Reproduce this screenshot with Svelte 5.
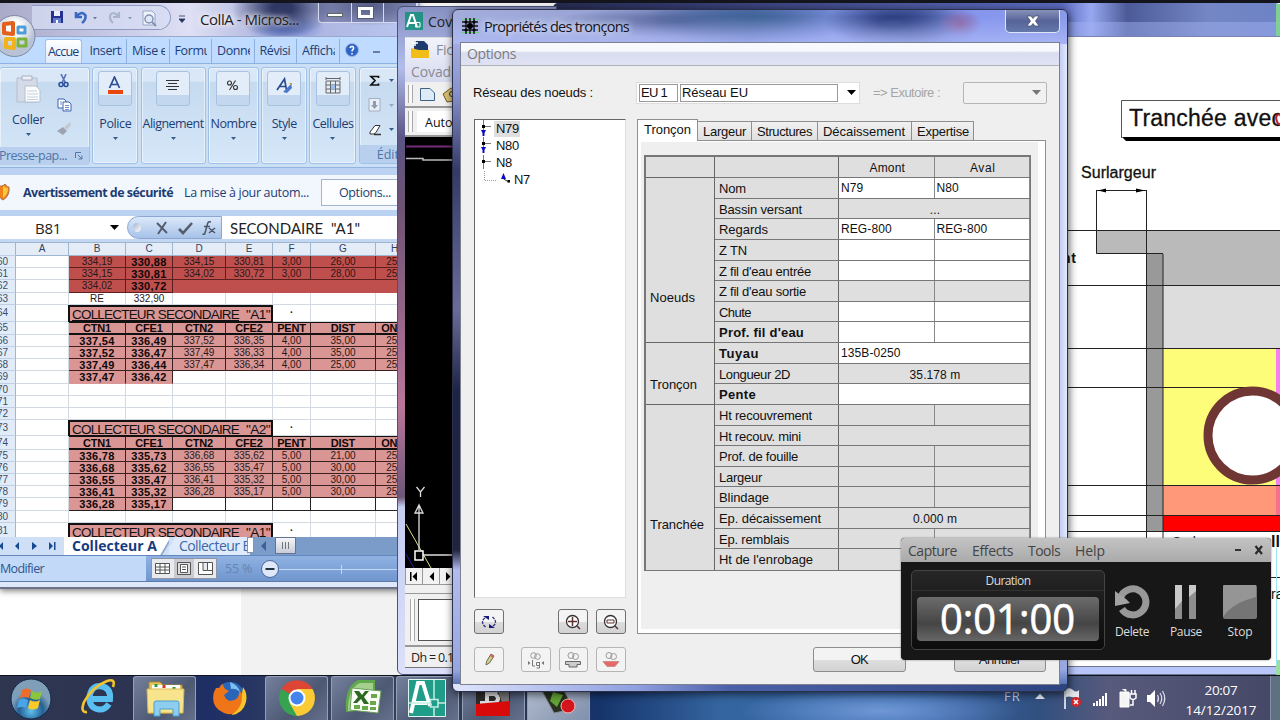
<script lang="ts">
  type Row = { n: string; h: number; kind: string; cells: string[] };

  // spreads the letters of a label over a given width
  function fit(node: HTMLElement, width: number) {
    if (!width) return;
    const chars = node.textContent!.trim().length;
    const natural = node.getBoundingClientRect().width;
    node.style.letterSpacing = `${(width - natural) / chars}px`;
  }

  const tabs = ["Accue", "Inserti", "Mise e", "Formu", "Donné", "Révisi", "Afficha"];

  const groups = [
    { label: "Police", w: 46, tw: 32, icon: "font" },
    { label: "Alignement", w: 65, tw: 61, icon: "align" },
    { label: "Nombre", w: 51, tw: 46, icon: "percent" },
    { label: "Style", w: 46, tw: 25, icon: "style" },
    { label: "Cellules", w: 47, tw: 41, icon: "cells" },
  ];

  const cols = [
    { name: "A", w: 53 },
    { name: "B", w: 57 },
    { name: "C", w: 47 },
    { name: "D", w: 53 },
    { name: "E", w: 47 },
    { name: "F", w: 38 },
    { name: "G", w: 65 },
    { name: "H", w: 38 },
  ];

  const head = ["CTN1", "CFE1", "CTN2", "CFE2", "PENT", "DIST", "ON C"];

  const rows: Row[] = [
    { n: "60", h: 12, kind: "dark", cells: ["334,19", "330,88", "334,15", "330,81", "3,00", "26,00", "250"] },
    { n: "61", h: 12, kind: "dark", cells: ["334,15", "330,81", "334,02", "330,72", "3,00", "28,00", "250"] },
    { n: "62", h: 13, kind: "dark merged", cells: ["334,02", "330,72", "", "", "", "", ""] },
    { n: "63", h: 12, kind: "plain", cells: ["RE", "332,90", "", "", "", "", ""] },
    { n: "64", h: 17, kind: "title", cells: ['"A1"'] },
    { n: "65", h: 13, kind: "head", cells: head },
    { n: "66", h: 12, kind: "pink", cells: ["337,54", "336,49", "337,52", "336,35", "4,00", "35,00", "250"] },
    { n: "67", h: 12, kind: "pink", cells: ["337,52", "336,47", "337,49", "336,33", "4,00", "35,00", "250"] },
    { n: "68", h: 12, kind: "pink", cells: ["337,49", "336,44", "337,47", "336,34", "4,00", "25,00", "250"] },
    { n: "69", h: 13, kind: "pink last", cells: ["337,47", "336,42", "", "", "", "", ""] },
    { n: "70", h: 12, kind: "plain", cells: ["", "", "", "", "", "", ""] },
    { n: "71", h: 12, kind: "plain", cells: ["", "", "", "", "", "", ""] },
    { n: "72", h: 12, kind: "plain", cells: ["", "", "", "", "", "", ""] },
    { n: "73", h: 16, kind: "title", cells: ['"A2"'] },
    { n: "74", h: 14, kind: "head", cells: head },
    { n: "75", h: 12, kind: "pink", cells: ["336,78", "335,73", "336,68", "335,62", "5,00", "21,00", "250"] },
    { n: "76", h: 12, kind: "pink", cells: ["336,68", "335,62", "336,55", "335,47", "5,00", "30,00", "250"] },
    { n: "77", h: 12, kind: "pink", cells: ["336,55", "335,47", "336,41", "335,32", "5,00", "30,00", "250"] },
    { n: "78", h: 12, kind: "pink", cells: ["336,41", "335,32", "336,28", "335,17", "5,00", "30,00", "250"] },
    { n: "79", h: 13, kind: "pink last ruled", cells: ["336,28", "335,17", "", "", "", "", ""] },
    { n: "80", h: 12, kind: "plain", cells: ["", "", "", "", "", "", ""] },
    { n: "81", h: 17, kind: "title", cells: ['"A1"'] },
  ];

  const dlgTabs = [
    { label: "Largeur", w: 54, tw: 43 },
    { label: "Structures", w: 66, tw: 55 },
    { label: "Décaissement", w: 94, tw: 82 },
    { label: "Expertise", w: 62, tw: 52 },
  ];

  // mode: two = split cell, one = merged cell; ro = greyed
  const props = [
    { label: "Nom", w: 27, mode: "two", a: "N79", b: "N80" },
    { label: "Bassin versant", w: 83, mode: "one", ro: true, a: "..." },
    { label: "Regards", w: 49, mode: "two", a: "REG-800", b: "REG-800" },
    { label: "Z TN", w: 28, mode: "two" },
    { label: "Z fil d'eau entrée", w: 92, mode: "two" },
    { label: "Z fil d'eau sortie", w: 87, mode: "two", ro: true },
    { label: "Chute", w: 32, mode: "two" },
    { label: "Prof. fil d'eau", w: 85, mode: "two", bold: true },
    { label: "Tuyau", w: 40, mode: "one", bold: true, a: "135B-0250" },
    { label: "Longueur 2D", w: 71, mode: "one", ro: true, a: "35.178 m" },
    { label: "Pente", w: 37, mode: "one", bold: true },
    { label: "Ht recouvrement", w: 93, mode: "two", ro: true },
    { label: "Ht recouv. mini", w: 82, mode: "one", ro: true },
    { label: "Prof. de fouille", w: 79, mode: "two", ro: true },
    { label: "Largeur", w: 43, mode: "two", ro: true },
    { label: "Blindage", w: 50, mode: "two", ro: true },
    { label: "Ep. décaissement", w: 102, mode: "one", ro: true, a: "0.000 m" },
    { label: "Ep. remblais", w: 70, mode: "two", ro: true },
    { label: "Ht de l'enrobage", w: 94, mode: "one", ro: true },
  ];
</script>

{#snippet t(text: string, w: number, cls = "")}
  <span class="t {cls}" use:fit={w}>{text}</span>
{/snippet}

{#snippet down(color = "#3b5a8c")}
  <svg class="down" width="5" height="3" viewBox="0 0 5 3"><path d="M0 0H5L2.5 3Z" fill={color} /></svg>
{/snippet}

<div class="desktop">
  <!-- trench drawing window -->
  <section class="window drawing">
    <svg width="727" height="672" viewBox="553 3 727 672">
      <defs>
        <linearGradient id="dtitle" x1="0" x2="1" y1="0" y2="0">
          <stop offset="0" stop-color="#252a50" />
          <stop offset=".7" stop-color="#5b6abf" />
          <stop offset=".74" stop-color="#98a8f0" />
          <stop offset=".79" stop-color="#4c5a98" />
          <stop offset=".9" stop-color="#7486c4" />
          <stop offset="1" stop-color="#6d83c6" />
        </linearGradient>
      </defs>
      <rect x="553" y="3" width="727" height="672" rx="5" fill="url(#dtitle)" />
      <rect x="1060" y="22" width="220" height="15" fill="#a4b4f5" opacity=".45" />
      <rect x="1276" y="4" width="4" height="33" fill="#7fcf97" />
      <path d="M1060 36.5H1280" stroke="#7a83ad" />
      <rect x="1060" y="37" width="220" height="631" fill="#fff" />
      <rect x="1060" y="667" width="220" height="8" fill="#b9c6fa" />
      <path d="M1060 666.5H1280M1060 674.5H1280" stroke="#6d7590" />
      <rect x="1276" y="660" width="4" height="15" fill="#9adf9f" />

      <path d="M1280 100.500H1121.500V138" fill="none" stroke="#555" />
      <path d="M1122 137H1280V141H1126Z" fill="#000" />
      <text x="1129" y="125.500" font-size="23" textLength="154" stroke="#111" stroke-width=".3" class="cad">Tranchée avec</text>
      <path d="M1280 114Q1275 115 1276.500 120T1280 124" fill="none" stroke="#c0202a" stroke-width="2" />
      <text x="1081" y="177.500" font-size="16" textLength="75" stroke="#111" stroke-width=".3" class="cad">Surlargeur</text>

      <rect x="1096" y="230" width="184" height="24" fill="#bababa" />
      <rect x="1146" y="230" width="134" height="55" fill="#bababa" />
      <rect x="1163" y="286" width="117" height="62" fill="#ddd" />
      <rect x="1163" y="349" width="117" height="136" fill="#fdfd7a" />
      <rect x="1163" y="486" width="117" height="29" fill="#ff9878" />
      <rect x="1163" y="516" width="117" height="15" fill="#fe0000" />
      <rect x="1276" y="349" width="4" height="136" fill="#f57ff0" />
      <rect x="1276" y="486" width="4" height="29" fill="#f9708c" />
      <rect x="1146" y="253" width="17" height="278" fill="#999" />
      <path
        d="M1096.500 190V253.500H1163M1146.500 190V538M1163 254V538M1068 230.500H1280M1068 285.500H1280M1068 348.500H1280M1068 485.500H1280M1068 515.500H1280M1068 531.500H1280M1097 190.500H1147M1068 387.500H1252M1271 577.500H1280"
        fill="none"
        stroke="#222"
      />
      <path d="M1098 190.500L1106 188.500V192.500ZM1145 190.500L1136 188.500V192.500Z" />
      <circle cx="1252.500" cy="435.500" r="44.500" fill="#fff" stroke="#703634" stroke-width="9" />
      <path d="M1276.500 548V665" stroke="#9be6ee" />
      <text x="1032" y="263" font-size="14" font-weight="700" textLength="44" class="cad">ement</text>
      <text x="1172" y="547" font-size="14" textLength="94" class="cad">Surlargeur sous</text>
      <text x="1271" y="547" font-size="16" font-weight="700" class="cad">ll</text>
      <text x="1271" y="599" font-size="14" class="cad">ra</text>
    </svg>
  </section>

  <!-- spreadsheet -->
  <section class="window excel">
    <header class="xl-title">
      <div class="qat">
        <svg width="120" height="20" viewBox="0 0 120 20">
          <path d="M3 3H15V15H3Z" fill="#27308e" /><path d="M6 3H12V8H6Z" fill="#e8eefc" /><path d="M5 10H13V15H5Z" fill="#5d7ad0" /><path d="M8 12H10V15H8Z" fill="#fff" />
          <path d="M28 4V9H34M28.500 8.500Q34 2 37.500 7.500Q38 12 34 15" fill="none" stroke="#3a68c0" stroke-width="2.600" />
          <path d="M45 9H49L47 11.500Z" fill="#6b7ba0" />
          <path d="M71 4V9H65M70.500 8.500Q65 2 62 7.500Q61.500 12 65 15" fill="none" stroke="#a9b5cc" stroke-width="2.200" />
          <path d="M80 9H84L82 11.500Z" fill="#8c9ab8" />
          <path d="M95 3H104L107 6V17H95Z" fill="#eef2fa" stroke="#9aa8c4" /><circle cx="101" cy="11" r="4" fill="#dfe8f6" stroke="#8292b4" stroke-width="1.500" /><path d="M104 14L108 18" stroke="#8292b4" stroke-width="2" />
        </svg>
      </div>
      <svg class="more" width="7" height="8" viewBox="0 0 7 8"><path d="M0 1H6M0 4H6L3 7.500Z" fill="#23335f" stroke="#23335f" stroke-width=".8" /></svg>
      <h1>{@render t("CollA - Micros...", 99)}</h1>
      <div class="winbtns">
        <span><i class="min"></i></span>
        <span><i class="max"></i></span>
        <span></span>
      </div>
      <svg class="office" width="43" height="44" viewBox="0 0 43 44">
        <defs>
          <radialGradient id="orb" cy=".3"><stop offset=".3" stop-color="#fff" /><stop offset="1" stop-color="#b9c2d4" /></radialGradient>
        </defs>
        <circle cx="21.500" cy="22" r="20.500" fill="url(#orb)" stroke="#7c8aa8" />
        <g fill="none" stroke-width="4" stroke-linejoin="round">
          <path d="M11 10L20 9V20L11 19Z" stroke="#e2601c" />
          <path d="M25 13H32V19H25Z" stroke="#4e9cd8" stroke-width="3" />
          <path d="M13 25L21 25V34L13 33Z" stroke="#f2b21c" />
          <path d="M25 25H33V32H25Z" stroke="#7ab33c" stroke-width="3" />
        </g>
      </svg>
    </header>

    <nav class="xl-tabs">
      {#each tabs as tab, i}
        <span class="xl-tab" class:active={i === 0}><em>{tab}</em></span>
      {/each}
      <svg class="help" width="14" height="14" viewBox="0 0 14 14">
        <circle cx="7" cy="7" r="6.500" fill="#2f63c8" stroke="#9ab4e0" />
        <path d="M5 5Q5.500 3 7.500 3.500Q9.500 4.500 8 6.500Q7 7 7 8.500M7 10V11.500" fill="none" stroke="#fff" stroke-width="1.500" />
      </svg>
      <i class="dash"></i>
    </nav>

    <div class="ribbon">
      <div class="group clip">
        <div class="paste">
          <svg width="26" height="30" viewBox="0 0 26 30">
            <path d="M2 4H22V28H2Z" fill="#d5dbe6" stroke="#b4becf" /><path d="M7 2H17V6H7Z" fill="#eef1f6" stroke="#a3afc2" />
            <path d="M10 12H21L25 16V28H10Z" fill="#fafbfd" stroke="#b4becf" /><path d="M12 17H22M12 20H23M12 23H23M12 25.500H23" stroke="#c9d1de" />
          </svg>
          {@render t("Coller", 32)}
          {@render down()}
        </div>
        <div class="clip-tools">
          <svg width="14" height="14" viewBox="0 0 14 14"><path d="M4 0L8.500 9M9 0L5 9" stroke="#5272b4" stroke-width="1.600" /><circle cx="4" cy="10.500" r="2" fill="none" stroke="#2b4d9c" stroke-width="1.500" /><circle cx="9" cy="10.500" r="2" fill="none" stroke="#2b4d9c" stroke-width="1.500" /></svg>
          <svg width="15" height="14" viewBox="0 0 15 14"><path d="M1 1H7L9 3V10H1Z" fill="#fff" stroke="#3e63ae" /><path d="M6 4H12L14 6V13H6Z" fill="#fff" stroke="#3e63ae" /><path d="M8 7.500H12M8 9.500H12M8 11.500H12M3 4H5M3 6H5" stroke="#6f8fd0" /></svg>
          <svg width="14" height="14" viewBox="0 0 14 14"><path d="M13 0L14 3L10 8L7 5Z" fill="#c3c9d2" /><path d="M6 5L10 9L6 13L0 9Z" fill="#9ba4b0" /></svg>
        </div>
        <footer>{@render t("Presse-pap...", 68)}<svg width="8" height="8" viewBox="0 0 8 8"><path d="M.5 6V.5H6M3 3L7 7M7 3.500V7H3.500" fill="none" stroke="#5376a8" /></svg></footer>
      </div>
      {#each groups as g}
        <div class="group" style:width="{g.w}px">
          <div class="tile">
            <svg width="20" height="20" viewBox="0 0 20 20">
              {#if g.icon === "font"}
                <path d="M4.500 12L9.500 1L14.500 12M6.500 8.500H12.500" fill="none" stroke="#2a4b90" stroke-width="1.700" /><path d="M3 14H18V18H3Z" fill="#e8480e" />
              {:else if g.icon === "align"}
                <path d="M3 4.500H16M5 7.500H14M3 10.500H16M5 13.500H14" stroke="#333" stroke-width="1.200" />
              {:else if g.icon === "percent"}
                <g fill="none" stroke="#333" stroke-width="1.100"><circle cx="6.500" cy="7" r="2" /><circle cx="12.500" cy="11.500" r="2" /><path d="M12.500 4.500L6.500 14" /></g>
              {:else if g.icon === "style"}
                <path d="M3 14L10.500 3L12.500 14M6 10.500H12" fill="none" stroke="#2a4b90" stroke-width="1.700" /><path d="M9 16L17 8L18 12L13 17Z" fill="#4b79c8" /><path d="M15 7L18 7V10Z" fill="#d99b2c" />
              {:else}
                <path d="M3 5H17V17H3ZM3 9H17M3 13H17M7.500 5V17M12.500 5V17M3 1V4M17 1V4M3 2.500H17" fill="none" stroke="#666" /><path d="M8 9H12V13H8Z" fill="#9dbcf0" />
              {/if}
            </svg>
          </div>
          {@render t(g.label, g.tw)}
          {@render down()}
        </div>
      {/each}
      <div class="group edit">
        <div class="edit-row"><svg width="14" height="12" viewBox="0 0 14 12"><path d="M10.500 3V1.500H3L7 5.500L3 10H10.500V8.500" fill="none" stroke="#111" stroke-width="1.700" /></svg>{@render down()}</div>
        <div class="edit-row"><svg width="14" height="14" viewBox="0 0 14 14"><path d="M1 .5H12V13H1Z" fill="#e9edf5" stroke="#a3afc2" /><path d="M5 3H8V7H10L6.500 11L3 7H5Z" fill="#8d9bb4" /></svg>{@render down("#9aa8c0")}</div>
        <div class="edit-row"><svg width="14" height="12" viewBox="0 0 14 12"><path d="M2 8L7 1.500H12L8 8.500L6 10H2Z" fill="#fff" stroke="#333" /><path d="M6 10.500H13" stroke="#333" stroke-width="1.500" /></svg>{@render down()}</div>
        <footer>Édition</footer>
      </div>
    </div>

    <div class="msgbar">
      <svg width="14" height="18" viewBox="0 0 14 18"><path d="M-4 2Q3 3 5 0Q8 4 9 3Q10 12 3 16Q-2 14 -4 2Z" fill="#f0821a" stroke="#b0704c" /><path d="M3 2V14Q8 10 8 4Q6 4 3 2Z" fill="#fbc640" /></svg>
      {@render t("Avertissement de sécurité", 150, "bold")}
      {@render t("La mise à jour autom...", 125)}
      <button>{@render t("Options...", 52)}</button>
    </div>

    <div class="formula">
      <div class="ref">{@render t("B81", 26)}<svg width="9" height="5" viewBox="0 0 9 5"><path d="M0 0H9L4.500 5Z" /></svg></div>
      <div class="fx">
        <i></i>
        <svg width="62" height="16" viewBox="0 0 62 16">
          <path d="M2 3L12 13M11 2L3 14" stroke="#555d6c" stroke-width="2" /><path d="M24 9L28 13L37 3" fill="none" stroke="#555d6c" stroke-width="2.600" />
          <path d="M56 2Q53 1 52.500 4L50 13Q49.500 15 47.500 14M49 6.500H55M54 8L60 13M60 8L54 13" fill="none" stroke="#4b5568" stroke-width="1.500" />
        </svg>
      </div>
      <div class="value">{@render t('SECONDAIRE  "A1"', 130)}</div>
    </div>

    <div class="sheet">
      <div class="row colhead">
        <div class="rn"></div>
        {#each cols as c}<div class="cell" style:width="{c.w}px">{c.name}</div>{/each}
      </div>
      {#each rows as r}
        <div class="row {r.kind}" style:height="{r.h}px">
          <div class="rn">{r.n}</div>
          <div class="cell blank" style:width="53px"></div>
          {#if r.kind === "title"}
            <div class="cell banner">{@render t("COLLECTEUR SECONDAIRE", 167, "under")}{@render t(r.cells[0], 24)}</div>
            <div class="cell" style:width="38px">.</div>
            <div class="cell" style:width="65px"></div>
            <div class="cell" style:width="38px"></div>
          {:else}
            {#each r.cells as v, i}
              <div class="cell" class:filled={v !== ""} style:width="{cols[i + 1].w}px">{v}</div>
            {/each}
          {/if}
        </div>
      {/each}
    </div>

    <div class="sheetbar">
      <svg width="64" height="18" viewBox="0 0 64 18"><path d="M3 5V13L-1 9ZM19 5V13L15 9ZM32 5V13L37 9ZM49 5V13L53 9ZM54 5H55.500V13H54Z" fill="#174a92" /></svg>
      <div class="stab on">{@render t("Collecteur A", 85, "bold")}</div>
      <div class="stab">{@render t("Collecteur B", 72)}</div>
      <div class="split"></div>
      <svg width="20" height="18" viewBox="0 0 20 18"><path d="M12 4V14L7 9Z" fill="#3f5f96" /></svg>
      <div class="thumb"><i></i><i></i><i></i></div>
    </div>

    <div class="status">
      <span class="mode">{@render t("Modifier", 44)}</span>
      <div class="views">
        <svg width="64" height="19" viewBox="0 0 64 19">
          <path d="M3.500 4.500H17.500V14.500H3.500ZM3.500 8H17.500M3.500 11H17.500M8 4.500V14.500M13 4.500V14.500" fill="#fff" stroke="#555" />
          <rect x="22" y="0" width="20" height="19" fill="#c9cbd0" /><path d="M25.500 3.500H38.500V15.500H25.500Z" fill="#ddd" stroke="#555" /><path d="M28.500 5.500H35.500V13.500H28.500ZM30 8H34M30 10.500H34" fill="#fff" stroke="#555" />
          <path d="M46.500 3.500H60.500V15.500H46.500ZM51 3.500V11.500H55.500V3.500M55.500 11.500H60" fill="#fff" stroke="#555" />
        </svg>
      </div>
      <span class="pct">{@render t("55 %", 27)}</span>
      <svg width="140" height="22" viewBox="0 0 140 22"><path d="M18 11.500H140M80.500 7V16" stroke="#c5daf6" /><circle cx="9" cy="11" r="8.500" fill="#dfe8f8" stroke="#4a679a" /><path d="M4.500 11H13.500" stroke="#234" stroke-width="2" /></svg>
    </div>
  </section>

  <!-- CAD window -->
  <section class="window cad-win">
    <header><svg width="18" height="18" viewBox="0 0 18 18"><path d="M0 0H18V18H0Z" fill="#239386" /><path d="M2 15L6 3H8L12 15M4 11H11" fill="none" stroke="#fff" stroke-width="2" /><path d="M10.500 10.500H15V15H10.500Z" fill="none" stroke="#fff" /></svg>{@render t("Covadis", 51)}</header>
    <div class="cad-body">
      <div class="cad-menu">
        <div><svg width="19" height="19" viewBox="0 0 19 19"><path d="M3 1H13L17 5V12H3Z" fill="#1d3c6c" /><path d="M4 0V6M1 3H7" stroke="#fff" stroke-width="1.500" /><path d="M0 8L8 10H18V18L0 18Z" fill="#f3bd18" /></svg>{@render t("Fichier", 41)}</div>
        <div>{@render t("Covadis", 50)}</div>
      </div>
      <div class="cad-tools">
        <i class="grip"></i>
        <svg width="40" height="20" viewBox="0 0 40 20"><path d="M3.500 3.500H13L17.500 8V15.500H3.500Z" fill="#dcebf5" stroke="#3f6282" /><path d="M26 9L34 3L38 5V16L30 17Z" fill="#d8be72" stroke="#6b5a20" /><circle cx="35" cy="9" r="2.500" fill="none" stroke="#333" /></svg>
      </div>
      <div class="cad-tools layer"><i class="grip"></i><div>Auto</div></div>
      <svg class="model" width="60" height="431" viewBox="405 136 60 431">
        <path d="M405 136H465V567H405Z" />
        <path d="M406 145.500H465" stroke="#742f7c" stroke-width="2" /><path d="M406 157.500H423V159H465" fill="none" stroke="#bbb" stroke-width="1.500" />
        <path d="M406 523L431 567" stroke="#dbe08a" /><path d="M406 553L414 567" stroke="#2222a0" />
        <path d="M419 549V504M415 512H423L419 504ZM424 554H465M416.500 486L420.500 491L424.500 486M420.500 491V496" fill="none" stroke="#ddd" stroke-width="1.300" />
        <path d="M415 550H423V559H415Z" stroke="#fff" stroke-width="1.500" />
      </svg>
      <div class="pager"><svg width="60" height="17" viewBox="0 0 60 17"><path d="M0 0H60V17H0Z" fill="#f2f2f2" /><path d="M.5 0V17M17.500 0V17M34.500 0V17M0 16.500H60" stroke="#999" /><path d="M5 4V13H6.500V4ZM12 4V13L7.500 8.500ZM29 4V13L24.500 8.500ZM41 4V13L45.500 8.500Z" /></svg></div>
      <div class="command"><i class="grip"></i><div></div></div>
      <div class="coords">{@render t("Dh = 0.17", 49)}</div>
    </div>
  </section>

  <!-- taskbar -->
  <footer class="taskbar">
    <div class="start">
      <svg width="42" height="42" viewBox="0 0 42 42">
        <defs><radialGradient id="start" cx=".5" cy=".8"><stop offset="0" stop-color="#62c3f0" /><stop offset=".6" stop-color="#235e90" /><stop offset="1" stop-color="#7f9fb8" /></radialGradient></defs>
        <circle cx="21" cy="21" r="20" fill="url(#start)" stroke="#122848" />
        <path d="M12 12Q17 9 21 12L19 20Q14 18 10 20Z" fill="#f06c28" /><path d="M22 13Q27 16 32 13L30 21Q25 23 20 20Z" fill="#8cc63c" /><path d="M9 22Q14 19 18 22L16 30Q12 28 7 30Z" fill="#4aa4e8" /><path d="M20 22Q25 25 30 22L28 30Q22 33 18 30Z" fill="#fbc928" />
      </svg>
    </div>
    <div class="task ie">
      <svg width="38" height="38" viewBox="0 0 38 38">
        <path d="M29 26Q25 32 19 31.500Q9 30 9.500 19Q11 8 20 8Q31 9 30 21H11" fill="none" stroke="#58bff0" stroke-width="6" />
        <path d="M7 34Q0 35 4 24Q12 9 27 3Q36 0 33 9" fill="none" stroke="#f3c42c" stroke-width="2.600" />
      </svg>
    </div>
    <div class="task open folder">
      <svg width="40" height="38" viewBox="0 0 40 38">
        <path d="M3 3H14L17 6H36V34H3Z" fill="#e6c65c" stroke="#a88a30" /><path d="M6 6H34V12H6Z" fill="#fff" /><path d="M10 5V8M28 8V10" stroke="#2a9a3c" stroke-width="3" /><path d="M18 6V9" stroke="#d03a2a" stroke-width="3" />
        <path d="M1 10H38L37 34H2Z" fill="#f8e48c" stroke="#d8b850" /><path d="M8 37V24Q8 22 10 22H31Q33 22 33 24V37H27V30H14V37Z" fill="#8ccdf0" stroke="#4d9fcc" />
      </svg>
    </div>
    <div class="task ff">
      <svg width="36" height="36" viewBox="0 0 36 36">
        <circle cx="18" cy="17" r="15" fill="#2a65b8" /><path d="M18 2Q26 5 28 12Q24 8 19 9Z" fill="#7bc0f0" />
        <path d="M4 8L8 8Q8 5 11 4Q11 9 17 11L12 15Q15 23 22 20Q28 18 27 10Q36 20 30 28Q23 37 12 33Q-2 27 2 12Z" fill="#ef7518" /><path d="M31 7Q36 14 34 22Q31 34 19 35Q31 28 30 14Z" fill="#f9c32c" />
      </svg>
    </div>
    <div class="task open chrome">
      <svg width="38" height="38" viewBox="0 0 38 38">
        <path d="M19 19L3.500 10A18 18 0 0 1 34.500 10Z" fill="#dd4535" /><path d="M19 19L3.500 10A18 18 0 0 0 19 37Z" fill="#35a350" /><path d="M19 19L34.500 10A18 18 0 0 1 19 37L11 23Z" fill="#fbcb35" /><path d="M19 10H34.500L27 24Z" fill="#fbcb35" /><path d="M3.500 10L11 23L18 28Z" fill="#35a350" />
        <circle cx="19" cy="19" r="8.500" fill="#fff" /><circle cx="19" cy="19" r="6.500" fill="#4384ee" />
      </svg>
    </div>
    <div class="task open xl">
      <svg width="38" height="36" viewBox="0 0 38 36">
        <path d="M2 33Q0 8 14 1H31V30Z" fill="#5fa94c" /><path d="M4 32Q4 9 16 4H29V31Z" fill="#a4d08e" />
        <path d="M8 9L37 12L34 34L6 31Z" fill="#fafdf8" stroke="#6aa058" /><path d="M10 12L15 12L18 16L21 12L25 12L20 18L25 25L20 25L17 20L13 24L9 24L14 18Z" fill="#2c6a24" />
        <path d="M27 15H33V19H27ZM26 22H32V26H26ZM18 27H24V31H18ZM10 26H16V30H10ZM26 28H32V31H26Z" fill="#6aa84c" />
      </svg>
    </div>
    <div class="task open acad">
      <svg width="38" height="38" viewBox="0 0 38 38">
        <path d="M.5.5H37.500V37.500H.5Z" fill="#1f9d88" stroke="#dff4ef" /><path d="M3 34L10 4H15L22 27M5 24H19" fill="none" stroke="#fff" stroke-width="4" /><path d="M26 1V20M30 24H37M22 24H1M26 29V37M22.500 20.500H30V28H22.500Z" fill="none" stroke="#c4eee4" stroke-width="1.500" />
      </svg>
    </div>
    <div class="task open edit3d">
      <svg width="36" height="38" viewBox="0 0 36 38"><path d="M1 1H35V27H1Z" fill="#2b2b2b" /><path d="M5 24H20Q26 20 20 15H12V24M12 15H20Q23 10 18 8" fill="none" stroke="#ddd" stroke-width="4" /><path d="M23 12H34V24H27Z" fill="#777" /><path d="M1 25L35 22V37H1Z" fill="#d80a0a" /></svg>
    </div>
    <div class="task open rec">
      <svg width="38" height="38" viewBox="0 0 38 38"><path d="M2 12L22 8L34 30L14 34Z" fill="#28301e" stroke="#889" /><path d="M13 13L23 16L17 28L10 22Z" fill="#62a336" /><circle cx="28" cy="27" r="7" fill="#d5141c" stroke="#f0c0c0" /></svg>
    </div>
    <div class="tray">
      {@render t("FR", 17, "lang")}
      <svg width="160" height="26" viewBox="0 0 160 26">
        <path d="M13 14L18 8.500L23 14Z" fill="#e8edf5" />
        <path d="M43 4V24" stroke="#fff" stroke-width="1.500" /><path d="M44 4Q48 2 51 5T57 5V13Q53 13 50 12T44 12Z" fill="#e4e8ee" /><circle cx="54" cy="17" r="5" fill="#d3262a" /><path d="M52 15L56 19M56 15L52 19" stroke="#fff" stroke-width="1.500" />
        <path d="M71 21V18H73V21ZM74 21V16H76V21ZM77 21V14H79V21ZM80 21V11H82V21ZM83 21V8H85V21Z" fill="#fff" />
        <path d="M98 7H107V22H98ZM100.500 4.500H104V7" fill="#f5f5f5" stroke="#fff" /><path d="M108 9H114V13Q111 16 108 13ZM109.500 5V9M113 5V9M111 14V20H108" fill="none" stroke="#fff" stroke-width="1.500" />
        <path d="M125 10H128L133 5V22L128 17H125Z" fill="#fff" /><path d="M135.500 10Q137.500 13.500 135.500 17M138 8Q141.500 13.500 138 19M140.500 6Q145 13.500 140.500 21" fill="none" stroke="#dde" stroke-width="1.200" />
      </svg>
      <div class="clock">{@render t("20:07", 33)}{@render t("14/12/2017", 71)}</div>
      <div class="peek"></div>
    </div>
  </footer>

  <!-- properties dialog -->
  <section class="window dialog">
    <header>
      <svg width="18" height="18" viewBox="0 0 18 18"><path d="M0 2.500H18M0 15.500H18" stroke="#67d07a" /><path d="M5 1V17M9 1V17M13 1V17M1 5H17M1 9H17M1 13H17" stroke="#111" stroke-width="1.400" /><circle cx="9" cy="9" r="3" /><circle cx="5" cy="5" r="1.500" /><circle cx="13" cy="5" r="1.500" /><circle cx="5" cy="13" r="1.500" /><circle cx="13" cy="13" r="1.500" /></svg>
      {@render t("Propriétés des tronçons", 145)}
      <div class="close"><svg width="14" height="12" viewBox="0 0 14 12"><path d="M1 1H5L7 3.500L9 1H13L9.500 6L13 11H9L7 8.500L5 11H1L4.500 6Z" fill="#fff" stroke="#3c4868" stroke-width=".7" /></svg></div>
    </header>
    <div class="dlg-body">
      <div class="dlg-menu">{@render t("Options", 49)}</div>
      <div class="net">
        {@render t("Réseau des noeuds :", 120, "net-label")}
        <div class="combo">
          <span class="code">{@render t("EU 1", 26)}</span>
          <span class="name">{@render t("Réseau EU", 66)}</span>
          <svg width="9" height="5" viewBox="0 0 9 5"><path d="M0 0H9L4.500 5Z" /></svg>
        </div>
        {@render t("=> Exutoire :", 67, "outlet")}
        <div class="select"><svg width="9" height="5" viewBox="0 0 9 5"><path d="M0 0H9L4.500 5Z" fill="#777" /></svg></div>
      </div>
      <div class="main">
        <div class="left">
          <ul class="tree">
            <li><svg width="14" height="17" viewBox="0 0 14 17"><path d="M4.500 0V11M3 6.500H12" stroke="#777" /><path d="M3 5H6V8H3Z" /><path d="M2 10H7L5.500 13V16H3.500V13Z" fill="#0a0ac8" /></svg><b class="sel">{@render t("N79", 23)}</b></li>
            <li><svg width="14" height="17" viewBox="0 0 14 17"><path d="M4.500 0V11M3 6.500H12" stroke="#777" /><path d="M3 5H6V8H3Z" /><path d="M2 10H7L5.500 13V16H3.500V13Z" fill="#0a0ac8" /></svg><b>{@render t("N80", 23)}</b></li>
            <li><svg width="14" height="17" viewBox="0 0 14 17"><path d="M4.500 1V15M3 7.500H12" stroke="#777" /><path d="M3 6H6V9H3Z" /></svg><b>{@render t("N8", 16)}</b></li>
            <li><svg width="32" height="17" viewBox="0 0 32 17"><path d="M5.500 0V9.500H17" fill="none" stroke="#999" stroke-dasharray="1 1" /><path d="M22 8H27L24.500 2Z" fill="#0a0ac8" /><path d="M24.500 8L30 11" stroke="#333" /><path d="M28.500 9H31V11.500H28.500Z" /></svg><b>{@render t("N7", 16)}</b></li>
          </ul>
          <div class="tools">
            <button><svg width="18" height="16" viewBox="0 0 18 16"><path d="M5 4Q2.500 5.500 2.500 8T6 13.500M13 12Q15.500 10.500 15.500 8T12 2.500" fill="none" stroke="#30307c" stroke-width="1.300" stroke-dasharray="3 1" /><path d="M3 2H9V6ZM15 14H9V10Z" fill="#1a1a7c" /></svg></button>
            <button class="push"><svg width="18" height="16" viewBox="0 0 18 16"><circle cx="8.500" cy="7.500" r="6" fill="#fff" stroke="#333" stroke-width="1.300" /><path d="M8.500 3V12M4 7.500H13M13 12L16 15" stroke="#603030" stroke-width="1.500" /></svg></button>
            <button><svg width="18" height="16" viewBox="0 0 18 16"><circle cx="8.500" cy="7.500" r="6" fill="#fff" stroke="#333" stroke-width="1.300" /><path d="M5 6H12V9H5Z" fill="none" stroke="#603030" /><path d="M13 12L16 15" stroke="#603030" stroke-width="1.500" /></svg></button>
          </div>
          <div class="tools faded">
            <button><svg width="16" height="16" viewBox="0 0 16 16"><path d="M5 13L5.500 9.500L10 2L13 4L8.500 11Z" fill="#c8d090" stroke="#756a50" /><path d="M10 2L13 4L12 6L9 4Z" fill="#d86060" /></svg></button>
            <button class="lg"><svg width="18" height="18" viewBox="0 0 18 18"><circle cx="6.500" cy="4.500" r="2.800" fill="none" stroke="#999" /><circle cx="10.500" cy="5.500" r="2.800" fill="none" stroke="#999" /><path d="M5.500 9V15H8" fill="none" stroke="#777" /><path d="M1 10V14L3.500 12ZM17 10V14L14.500 12Z" fill="#777" /><path d="M12.500 11.500H9.500V14.500H12.500V11V17H9.500" fill="none" stroke="#777" /></svg></button>
            <button><svg width="18" height="18" viewBox="0 0 18 18"><circle cx="7" cy="4.500" r="3" fill="none" stroke="#999" /><circle cx="11.500" cy="5.500" r="3" fill="none" stroke="#999" /><path d="M1.500 10.500H16.500V13.500H13V16H5V13.500H1.500Z" fill="#ccc" stroke="#666" /></svg></button>
            <button><svg width="18" height="18" viewBox="0 0 18 18"><circle cx="7" cy="4.500" r="3" fill="none" stroke="#999" /><circle cx="11.500" cy="5.500" r="3" fill="none" stroke="#999" /><path d="M1 10.500H17L13 15.500H5Z" fill="#e86868" stroke="#c89090" /></svg></button>
          </div>
        </div>
        <div class="right">
          <div class="dlg-tabs">
            <div class="dtab on">{@render t("Tronçon", 47)}</div>
            {#each dlgTabs as d}<div class="dtab" style:width="{d.w}px">{@render t(d.label, d.tw)}</div>{/each}
          </div>
          <div class="panel">
            <div class="inner">
              <div class="grid">
                <div class="g g-top"></div>
                <div class="g g-noeuds">{@render t("Noeuds", 45)}</div>
                <div class="g g-troncon">{@render t("Tronçon", 47)}</div>
                <div class="g g-tranchee">{@render t("Tranchée", 54)}</div>
                <div class="lines">
                  <div class="line">
                    <div class="lab"></div>
                    <div class="val ro mid">{@render t("Amont", 36)}</div>
                    <div class="val ro mid">{@render t("Aval", 26)}</div>
                  </div>
                  {#each props as p}
                    <div class="line">
                      <div class="lab" class:strong={p.bold}>{@render t(p.label, p.w)}</div>
                      <div class="val" class:ro={p.ro} class:mid={p.ro} class:wide={p.mode === "one"}>{p.a ?? ""}</div>
                      {#if p.mode === "two"}<div class="val" class:ro={p.ro}>{p.b ?? ""}</div>{/if}
                    </div>
                  {/each}
                </div>
              </div>
            </div>
          </div>
          <div class="actions"><button>{@render t("OK", 17)}</button><button>{@render t("Annuler", 42)}</button></div>
        </div>
      </div>
    </div>
  </section>

  <!-- screen recorder -->
  <section class="window recorder">
    <nav>
      {@render t("Capture", 49)}{@render t("Effects", 41)}{@render t("Tools", 32)}{@render t("Help", 30)}
      <i></i>
      <svg width="10" height="10" viewBox="0 0 10 10"><path d="M1.500 1L8 9M8 1L1.500 9" stroke="#2a2a2a" stroke-width="2.200" /></svg>
    </nav>
    <div class="rec-body">
      <div class="duration">
        <h2>{@render t("Duration", 45)}</h2>
        <div class="display"><svg width="180" height="44"><text x="23" y="37" font-size="42" textLength="135" lengthAdjust="spacingAndGlyphs">0:01:00</text></svg></div>
      </div>
      <div class="rb"><svg width="36" height="38" viewBox="0 0 36 38"><path d="M6.500 15A13 13 0 1 1 8 26" fill="none" stroke="#989898" stroke-width="7" /><path d="M1 8V23L16 20L12 16Z" fill="#a2a2a2" /></svg>{@render t("Delete", 34)}</div>
      <div class="rb"><svg width="36" height="38" viewBox="0 0 36 38"><path d="M7 2H14V36H7ZM21 2H28V36H21Z" fill="#8e8e8e" /><path d="M7 2H14V18L7 26ZM21 2H28V8L21 14Z" fill="#c9c9c9" /></svg>{@render t("Pause", 32)}</div>
      <div class="rb"><svg width="36" height="38" viewBox="0 0 36 38"><rect x="1" y="2" width="34" height="34" rx="2" fill="#757575" /><path d="M1 3Q1 2 3 2H34V14Q10 20 1 34Z" fill="#959595" /></svg>{@render t("Stop", 25)}</div>
    </div>
  </section>
</div>

<style>
  :global(body) {
    margin: 0;
  }

  .desktop {
    position: relative;
    width: 1280px;
    height: 720px;
    overflow: hidden;
    background: linear-gradient(90deg, #fff 241px, #f2f2f2 241px);
    border-top: 3px solid #14141c;
    box-sizing: border-box;
    font-family: "Open Sans", "Noto Sans", sans-serif;
    font-size: 12.500px;
    color: #1d3d73;
  }

  .desktop *,
  .window {
    box-sizing: border-box;
  }

  svg {
    display: block;
    flex: none;
  }

  button {
    font: inherit;
    color: inherit;
    padding: 0;
  }

  .t {
    display: inline-block;
    flex: none;
    white-space: pre;
  }

  .bold {
    font-weight: 700;
  }

  .cad {
    font-family: "Liberation Sans", Arial, sans-serif;
    fill: #111;
  }

  .window {
    position: absolute;
    overflow: hidden;
  }

  .drawing {
    left: 553px;
    top: 0;
  }

  /* SPREADSHEET */
  .excel {
    left: 0;
    top: -1px;
    width: 420px;
    height: 587px;
    background: #dfe8fa;
    border-bottom: 2px solid #6b7287;
    box-shadow: 0 2px 6px rgba(0, 0, 0, 0.5);
  }

  .xl-title {
    position: relative;
    display: flex;
    height: 35px;
    align-items: center;
    background:
      radial-gradient(ellipse 50px 30px at 282px 6px, #2f3763 20%, transparent),
      radial-gradient(ellipse 40px 14px at 285px 26px, #5d77cf, transparent),
      radial-gradient(ellipse 60px 20px at 370px 4px, #51597f, transparent),
      linear-gradient(90deg, #a9a9c8, #c9cbe8 120px, #dfe0f5 190px, #c5c9e8 230px, #a7b0da 280px, #b9c4ee 397px);
    border-bottom: 1px solid #98a8c8;
  }

  .qat {
    margin: -4px 0 0 32px;
    width: 139px;
    height: 25px;
    padding: 2px 0 0 16px;
    border: 1px solid #8f9bc0;
    border-left: none;
    border-radius: 0 13px 13px 0;
    background: rgba(215, 222, 244, 0.75);
  }

  .more {
    margin-left: 8px;
  }

  .xl-title h1 {
    flex: none;
    margin: 0 0 1px 14px;
    font-size: 15px;
    font-weight: 400;
    color: #222;
    width: 118px;
    text-shadow: 0 0 5px #fff, 0 0 8px #fff;
  }

  .winbtns {
    display: flex;
    flex: none;
    align-self: flex-start;
    width: 100px;
    height: 21px;
    border: 1px solid #d6daf0;
    border-top: none;
    border-radius: 0 0 4px 4px;
    background: rgba(90, 96, 140, 0.5);
  }

  .winbtns span {
    width: 33px;
    border-right: 1px solid #d6daf0;
    display: flex;
    align-items: center;
    justify-content: center;
  }

  .min {
    width: 16px;
    height: 4px;
    background: #fff;
    border: 1px solid #666;
    margin-top: 6px;
  }

  .max {
    width: 15px;
    height: 11px;
    border: 3px solid #fff;
    outline: 1px solid #555a78;
    margin-right: 4px;
  }

  .office {
    position: absolute;
    left: -7px;
    top: 12px;
    z-index: 1;
  }

  .xl-tabs {
    display: flex;
    height: 27px;
    padding: 2px 0 0 45px;
    background: #bfdbff;
    border-bottom: 1px solid #8db2e3;
    align-items: stretch;
  }

  .xl-tab {
    width: 42.500px;
    padding: 3px 4px 0 5px;
    border-right: 1px solid #8fb0dc;
    font-size: 12.500px;
    letter-spacing: -0.4px;
    overflow: hidden;
    white-space: nowrap;
  }

  .xl-tab em {
    display: block;
    overflow: hidden;
    font-style: normal;
  }

  .xl-tab.active {
    width: 37px;
    margin-right: 2.500px;
    padding: 3px 1px 0 2px;
    border: 1px solid #9dbfe8;
    border-bottom: none;
    border-radius: 3px 3px 0 0;
    letter-spacing: -0.8px;
    background: linear-gradient(#fff, #dfebfa);
  }

  .help {
    margin: 4px 0 0 5px;
  }

  .dash {
    width: 7px;
    height: 2px;
    margin: 12px 0 0 14px;
    background: #6b7c9c;
  }

  .ribbon {
    display: flex;
    gap: 2.300px;
    height: 104px;
    padding: 3px 0 3px;
    background: #cbdff5;
    border-bottom: 1px solid #92b4de;
  }

  .group {
    display: flex;
    flex: none;
    flex-direction: column;
    align-items: center;
    border: 1px solid #9fc1e8;
    border-radius: 3px;
    background: linear-gradient(#d9e7f6 14%, #c6daf0 15%, #d5e7f8);
    box-shadow: inset 0 0 0 1px rgba(255, 255, 255, 0.5);
  }

  .group .t {
    font-size: 12.500px;
    line-height: 16px;
    margin-bottom: 5px;
  }

  .tile {
    width: 34px;
    height: 35px;
    margin: 3px 0 10px;
    padding: 4px 6px;
    border: 1px solid #a9c2e2;
    border-radius: 3px;
    background: linear-gradient(#e2edf9 70%, #c3d8ef 71%);
  }

  .clip {
    display: grid;
    grid-template: 79px 1fr / 53px 1fr;
    width: 90px;
    border-left: none;
    align-items: start;
  }

  .paste {
    display: flex;
    flex-direction: column;
    align-items: center;
    padding: 6px 0 0 3px;
  }

  .paste svg:first-child {
    margin-bottom: 8px;
  }

  .clip-tools {
    display: flex;
    flex-direction: column;
    gap: 10px;
    padding: 6px 0 0 4px;
  }

  .group footer {
    display: flex;
    align-self: stretch;
    grid-column: 1 / 3;
    height: 18px;
    background: #b8d0ed;
    color: #4f74a8;
    justify-content: space-between;
    align-items: center;
    padding-right: 6px;
  }

  .group footer .t {
    margin: 0 0 0 -1px;
  }

  .edit {
    width: 60px;
    align-items: flex-start;
  }

  .edit-row {
    display: flex;
    gap: 7px;
    align-items: center;
    height: 24.500px;
    padding: 1px 0 0 8px;
  }

  .edit footer {
    margin-top: auto;
    padding-left: 17px;
  }

  .msgbar {
    display: flex;
    height: 48px;
    align-items: center;
    border: solid #bcd2f2;
    border-width: 7px 0 6px;
    background: #f2f7fe;
  }

  .msgbar .bold {
    margin: 0 11px 0 9px;
  }

  .msgbar button {
    width: 90px;
    height: 27px;
    margin-left: 12px;
    padding-left: 17px;
    text-align: left;
    background: #fbfdff;
    border: 1px solid #a2b4d0;
  }

  .formula {
    display: flex;
    height: 26px;
    border-bottom: 3px solid #c3d7f5;
    font-size: 15px;
    line-height: 22px;
    color: #222;
    background: #fff;
  }

  .ref {
    display: flex;
    width: 127px;
    align-items: center;
    justify-content: space-between;
    padding: 0 8px 0 35px;
  }

  .fx {
    display: flex;
    width: 95px;
    align-items: center;
    border: 1px solid #8ba7d2;
    border-radius: 12px 0 0 12px;
    background: linear-gradient(#dbe8fa, #a7c2e8);
  }

  .fx i {
    width: 8px;
    height: 9px;
    margin: 0 14px 0 5px;
    border-radius: 50%;
    background: linear-gradient(135deg, #a3b2cd, #fff);
  }

  .value {
    padding: 1px 0 0 8px;
    font-family: Lato, "Open Sans", sans-serif;
  }

  .sheet {
    height: 295px;
    overflow: hidden;
    background: #fff;
    font: 10px/12px "Liberation Sans", Arial, sans-serif;
    color: #2a1818;
    border-top: 1px solid #9eb6ce;
  }

  .row {
    display: flex;
    width: 440px;
  }

  .rn {
    width: 16px;
    flex: none;
    border-right: 1px solid #9eb6ce;
    border-bottom: 1px solid #bfcfe4;
    background: #e2ecf8;
    color: #3a4c66;
    display: flex;
    align-items: center;
    justify-content: flex-end;
    padding-right: 7px;
  }

  .cell {
    display: flex;
    flex: none;
    align-items: center;
    justify-content: center;
    overflow: hidden;
    border-right: 1px solid #d3d9e0;
    border-bottom: 1px solid #d3d9e0;
    white-space: nowrap;
  }

  .colhead {
    height: 13px;
    color: #33425c;
  }

  .colhead .cell {
    background: #e4ecf7;
    border-color: #9eb6ce;
  }

  .dark .cell:not(.blank) {
    background: #bf4f4d;
    border-color: #5d1f1e;
  }

  .dark.merged .cell:nth-child(n + 5) {
    border-color: #bf4f4d;
  }

  .dark .cell:nth-child(4),
  .pink .cell:nth-child(3),
  .pink .cell:nth-child(4),
  .head .cell {
    font-weight: 700;
    font-size: 11px;
    letter-spacing: 0.3px;
    color: #100808;
  }

  .head .cell:not(.blank),
  .pink .filled {
    background: #d99694;
    border-color: #3b2020;
  }

  .head .cell:not(.blank) {
    border-bottom: 2px solid #111;
    border-top: 1px solid #111;
    letter-spacing: -0.2px;
  }

  .last .filled {
    border-bottom-color: #d99694;
  }

  .ruled .cell:not(.blank) {
    border-right-color: #222;
    border-bottom-color: #222;
  }

  .banner {
    width: 205px;
    margin-left: -1px;
    justify-content: space-between;
    align-items: flex-start;
    padding: 0 1px 0 2px;
    border: 2px solid #111;
    border-bottom: 1px solid #111;
    background: #d99694;
    font-size: 13.500px;
    line-height: 15px;
    color: #111;
  }

  .under {
    text-decoration: underline;
  }

  .title .blank {
    border-right: none;
  }

  .title .cell:nth-child(4) {
    font-weight: 700;
    line-height: 8px;
    padding-bottom: 6px;
  }

  .sheetbar {
    display: flex;
    height: 19px;
    border-bottom: 1px solid #6488bd;
    background: linear-gradient(90deg, #cfe0f6 250px, #7b9bc9 250px);
  }

  .stab {
    font-size: 14px;
    line-height: 18px;
    width: 78px;
    padding-left: 10px;
    overflow: hidden;
    color: #3a68a8;
    background: linear-gradient(120deg, transparent 5px, #dfeafa 6px);
  }

  .stab.on {
    width: 105px;
    padding-left: 8px;
    color: #153c80;
    background: linear-gradient(120deg, #fff 92%, #7e9cc8 93%, #cfe0f6 95%);
  }

  .split {
    width: 7px;
    height: 16px;
    background: #fff;
    border: 1px solid #8a93a5;
  }

  .thumb {
    display: flex;
    gap: 2px;
    justify-content: center;
    align-items: center;
    width: 21px;
    height: 17px;
    margin-left: 1px;
    border: 1px solid #64748f;
    background: linear-gradient(#f4f6fa, #c7ccd8);
  }

  .thumb i {
    width: 1px;
    height: 7px;
    background: #777;
  }

  .status {
    display: flex;
    height: 26px;
    align-items: center;
    background: linear-gradient(90deg, #c2d9f7 146px, transparent 146px), linear-gradient(#8fb2e2, #7096ce);
    border-bottom: 1px solid #5d7aa8;
    color: #2d5591;
  }

  .mode {
    width: 151px;
  }

  .views {
    background: #e8eaee;
    border: 1px solid #8c96a8;
  }

  .pct {
    margin: 0 8px 0 8px;
    width: 28px;
    color: #6484b2;
  }

  /* CAD WINDOW */
  .cad-win {
    left: 397px;
    top: 3px;
    width: 160px;
    height: 669px;
    padding: 0 0 0 7px;
    border: 1px solid #4b5278;
    border-radius: 6px 0 0 6px;
    background: linear-gradient(#8791c2, #b3bdec 60px, #5a5585 130px, #6e5374 200px, #b9769b 400px, #6d5678 490px, #c5cdf2 500px, #dce0fa);
  }

  .cad-win header {
    display: flex;
    gap: 5px;
    height: 30px;
    padding-top: 5px;
    font-size: 14px;
    color: #222;
  }

  .cad-body {
    height: 631px;
    background: #f0f0f0;
    border: 1px solid #777;
    border-left-width: 0;
    border-top-color: #ddd;
    color: #111;
  }

  .cad-menu {
    height: 44px;
    background: linear-gradient(#f2f3fb, #d5daef);
    font-size: 14px;
    color: #8a8a92;
    padding: 2px 0 0 6px;
  }

  .cad-menu div {
    display: flex;
    gap: 6px;
    height: 22px;
  }

  .cad-tools {
    display: flex;
    height: 26px;
    padding: 3px;
    gap: 4px;
    border-bottom: 2px solid #999;
  }

  .grip {
    width: 5px;
    flex: none;
    border: solid #aaa;
    border-width: 0 1px;
    background: #fafafa;
  }

  .layer {
    height: 29px;
  }

  .layer div {
    width: 80px;
    padding: 3px 0 0 8px;
    background: #fff;
  }

  .pager {
    height: 20px;
  }

  .command {
    display: flex;
    gap: 3px;
    height: 54px;
    padding: 5px 0 4px 5px;
    border: solid #999;
    border-width: 1px 0 2px;
    margin-top: 5px;
  }

  .command div {
    width: 90px;
    background: #fff;
    border: 1px solid #555;
  }

  .coords {
    padding: 2px 0 0 6px;
    color: #222;
  }

  /* DIALOG */
  .dialog {
    left: 452px;
    top: 6px;
    width: 616px;
    height: 683px;
    padding: 0 7px 7px;
    border: 1px solid #2b3048;
    border-radius: 6px;
    background:
      linear-gradient(transparent 20%, rgba(176, 188, 248, 0.75)) 0 0 / 100% 34px no-repeat,
      radial-gradient(ellipse 22px 14px at 507px 14px, #8a5f9c, transparent),
      radial-gradient(ellipse 70px 24px at 440px 12px, #2c3f80 20%, transparent) 0 0 / 100% 34px no-repeat,
      radial-gradient(ellipse 110px 26px at 300px 8px, #3f6498, transparent) 0 0 / 100% 34px no-repeat,
      radial-gradient(ellipse 130px 16px at 230px 12px, #4c5a90, transparent) 0 0 / 100% 34px no-repeat,
      linear-gradient(90deg, #a2addc, #97a2d4 30%, #6577c4 48%, #8696e8 62%, #5f70b8 75%, #8696ee 85%, #8b9ae8) 0 0 / 100% 34px no-repeat,
      linear-gradient(90deg, #dfe5fc, #8f9fe0 30%, #4c60a8 45%, #2e4480) 0 100% / 100% 7px no-repeat,
      linear-gradient(#b4bdf0, #8994cf 80px, #343a68 160px, #6a6c98 300px, #1e2447 380px, #20243e 540px, #b2bced 560px, #96a6e0 660px, #3d5b9c);
    box-shadow: 1px 2px 8px rgba(0, 0, 0, 0.65);
  }

  .dialog::after {
    content: "";
    position: absolute;
    right: 0;
    top: 34px;
    width: 7px;
    height: 600px;
    background: linear-gradient(90deg, #c3ccf2, #e2e9ff);
  }

  .dialog header {
    display: flex;
    height: 32px;
    gap: 5px;
    align-items: center;
    font-size: 14.500px;
    color: #151520;
    padding-left: 1px;
    text-shadow: 0 0 6px rgba(235, 240, 255, 0.9), 0 0 10px rgba(235, 240, 255, 0.9);
  }

  .close {
    display: flex;
    align-items: center;
    justify-content: center;
    align-self: flex-start;
    width: 55px;
    height: 23px;
    margin-left: auto;
    border: 1px solid #dfe4f6;
    border-top: none;
    border-radius: 0 0 5px 5px;
    background: linear-gradient(#8792b8, #566398 50%, #6478ac);
  }

  .dlg-body {
    height: 643px;
    background: #efefef;
    border: 1px solid #7c8090;
    font-family: "Liberation Sans", Arial, sans-serif;
    font-size: 13px;
    color: #111;
  }

  .dlg-menu {
    height: 23px;
    padding: 1px 0 0 6px;
    background: linear-gradient(#f8f9fd 35%, #d8ddf0 45%, #dfe3f3);
    border-bottom: 1px solid #b0b2b8;
    font: 14px "Open Sans", "Noto Sans", sans-serif;
    color: #7c7c80;
  }

  .net {
    display: flex;
    height: 53px;
    padding: 0 12px;
    align-items: center;
  }

  .combo {
    display: flex;
    align-items: center;
    width: 224px;
    height: 22px;
    margin-left: 43px;
    padding: 2px;
    border: 1px solid #ddd;
    background: #fff;
  }

  .combo span:not(:global(.t)) {
    height: 18px;
    padding-left: 1px;
    border: 1px solid #999;
    line-height: 16px;
  }

  .code {
    width: 39px;
    margin-right: 2px;
  }

  .name {
    width: 158px;
    margin-right: 9px;
  }

  .net :global(.outlet) {
    margin-left: 13px;
    color: #a5a5a5;
  }

  .select {
    display: flex;
    align-items: center;
    justify-content: flex-end;
    width: 84px;
    height: 22px;
    margin-left: auto;
    padding-right: 5px;
    border: 1px solid #b5b5b5;
    border-radius: 2px;
    background: #f1f1f1;
  }

  .main {
    display: flex;
    gap: 11px;
    padding-left: 13px;
  }

  .left {
    width: 152px;
  }

  .tree {
    height: 479px;
    margin: 0 0 11px;
    padding: 0 0 0 4px;
    list-style: none;
    background: #fff;
    border: 1px solid #ddd;
    border-top-color: #666;
    border-left-color: #666;
  }

  .tree li {
    display: flex;
    height: 17px;
    gap: 1px;
    align-items: center;
  }

  .tree b {
    font-weight: 400;
    padding: 0 1px 0 2px;
    line-height: 16px;
  }

  .sel {
    background: #dedede;
  }

  .tools {
    display: flex;
    gap: 8px;
    margin-bottom: 13px;
  }

  .tools button {
    display: flex;
    align-items: center;
    justify-content: center;
    width: 30px;
    height: 25px;
    border: 1px solid #707070;
    border-radius: 3px;
    background: linear-gradient(#f4f4f4 50%, #dcdcdc 51%, #d2d2d2);
  }

  .push {
    margin-left: 46px;
  }

  .lg {
    margin-left: 9px;
  }

  .tools.faded button {
    border-color: #b5b5b5;
    background: #f3f3f3;
  }

  .right {
    width: 409px;
  }

  .dlg-tabs {
    display: flex;
    align-items: flex-end;
    height: 21px;
  }

  .dtab {
    height: 19px;
    padding: 2px 0 0 5px;
    border: 1px solid #8f8f8f;
    border-left-width: 0;
    border-bottom: none;
    background: linear-gradient(#f1f1f1, #e0e0e0);
  }

  .dtab.on {
    width: 61px;
    height: 22px;
    padding: 2px 0 0 6px;
    border-left-width: 1px;
    background: #fff;
    margin-bottom: -1px;
    z-index: 1;
  }

  .panel {
    height: 494px;
    padding: 1px 7px 4px 3px;
    border: 1px solid #8f8f8f;
    background: #fff;
  }

  .inner {
    height: 100%;
    padding: 13px 0 0 3px;
    background: #efefef;
  }

  .grid {
    display: grid;
    grid-template: 21px 165px 62px 165px / 69px 1fr;
    width: 387px;
    border: solid #777;
    border-width: 2px 1px 1px 2px;
  }

  .g {
    grid-column: 1;
    padding-left: 4px;
    border-right: 1px solid #666;
    border-bottom: 1px solid #666;
    background: #dfdfdf;
  }

  .g-noeuds {
    padding-top: 112px;
  }

  .g-troncon {
    padding-top: 34px;
  }

  .g-tranchee {
    padding-top: 112px;
    border-bottom: none;
  }

  .lines {
    grid-row: 1 / 5;
    grid-column: 2;
    display: grid;
    grid-template-rows: 21px repeat(19, 1fr);
  }

  .line {
    display: flex;
    min-height: 0;
    border-bottom: 1px solid #777;
  }

  .line:last-child {
    border-bottom: none;
  }

  .lab {
    width: 124px;
    padding: 3px 0 0 4px;
    background: #dfdfdf;
    border-right: 1px solid #666;
  }

  .strong {
    font-weight: 700;
  }

  .val {
    flex: 1;
    padding: 3px 0 0 2px;
    background: #fff;
    border-right: 1px solid #888;
    font-size: 12px;
    letter-spacing: 0.1px;
  }

  .val.ro {
    background: #dfdfdf;
  }

  .val.mid {
    text-align: center;
    padding-top: 4px;
  }

  .actions {
    display: flex;
    gap: 48px;
    margin: 13px 0 0 176px;
  }

  .actions button {
    width: 93px;
    height: 25px;
    border: 1px solid #8c8c8c;
    border-radius: 3px;
    background: linear-gradient(#f3f3f3 50%, #dedede 51%, #d3d3d3);
  }

  /* TASKBAR */
  .taskbar {
    position: absolute;
    left: 0;
    top: 672px;
    width: 1280px;
    height: 45px;
    display: flex;
    align-items: stretch;
    border-top: 1px solid #0d1420;
    background:
      radial-gradient(ellipse 140px 25px at 880px 35px, #6f98d4, transparent),
      linear-gradient(90deg, #2f3650, #2c3452 130px, #1e2f66 210px, #38435c 330px, #2b3652 500px, #16346c 600px, #35659f 720px, #3767ad 900px, #31507f 1040px, #585a7c 1110px, #444765);
  }

  .start {
    width: 80px;
    padding: 2px 0 0 10px;
  }

  .task {
    display: flex;
    width: 63px;
    padding: 2px 0 0 12px;
  }

  .task.ie {
    width: 53px;
    padding-left: 0;
  }

  .task.ff {
    width: 69px;
    padding: 4px 0 0 16px;
  }

  .task.open {
    width: 63px;
    margin-right: 2.600px;
    border: 1px solid #95a0b5;
    border-bottom: none;
    border-radius: 3px 3px 0 0;
    background: linear-gradient(135deg, #74809c, #4d5873 60%, #65708c);
  }

  .task.open.folder {
    margin-right: 0;
  }

  .task.open.acad {
    padding-left: 11px;
  }

  .task.open.rec {
    background: linear-gradient(135deg, #b5bfd0, #8090ac);
  }

  .tray {
    display: flex;
    align-items: center;
    margin-left: auto;
    color: #fff;
    font-size: 13px;
  }

  .tray :global(.lang) {
    margin: -4px 1px 0 0;
    color: #c8d2e4;
  }

  .clock {
    display: flex;
    flex-direction: column;
    align-items: center;
    width: 78px;
    line-height: 20px;
    font-size: 13.500px;
    margin: 3px 10px 0 0;
  }

  .peek {
    width: 10px;
    height: 44px;
    border-left: 1px solid #8a8ea5;
    background: #5d7181;
  }

  /* RECORDER */
  .recorder {
    left: 901px;
    top: 535px;
    width: 370px;
    height: 122px;
    border-radius: 4px;
    background: #171717;
    box-shadow: 0 0 2px #777;
    color: #ddd;
  }

  .recorder nav {
    display: flex;
    height: 24px;
    gap: 15px;
    align-items: center;
    padding: 0 7px;
    background: linear-gradient(#c3c3c3, #aaa);
    color: #444;
    font-size: 14px;
  }

  .recorder nav i {
    width: 6px;
    height: 2px;
    margin-left: auto;
    margin-right: -2px;
    background: #333;
  }

  .rec-body {
    display: flex;
    padding: 8px 0 0 10px;
  }

  .duration {
    flex: none;
    width: 194px;
    height: 80px;
    border: 1px solid #444;
    border-radius: 5px;
    background: linear-gradient(#262626, #0c0c0c);
  }

  .duration h2 {
    margin: 0 0 6px;
    height: 20px;
    font-size: 12px;
    font-weight: 400;
    line-height: 20px;
    text-align: center;
    border-bottom: 1px solid #333;
  }

  .display {
    height: 44px;
    margin: 0 5px;
    border-radius: 4px;
    background: linear-gradient(#6c6c6c, #454545 60%, #666);
    overflow: hidden;
  }

  .display text {
    fill: #fff;
    stroke: #fff;
    stroke-width: 0.7px;
  }

  .rb {
    display: flex;
    flex: none;
    flex-direction: column;
    align-items: center;
    width: 54px;
    padding-top: 13px;
    font-size: 12px;
    line-height: 20px;
  }

  .rb svg {
    margin-bottom: 1px;
  }
</style>
